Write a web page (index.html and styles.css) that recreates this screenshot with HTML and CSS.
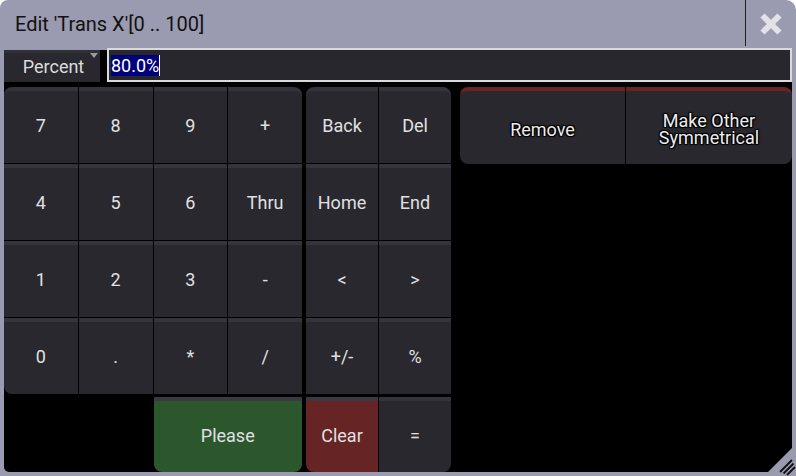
FILE: index.html
```html
<!DOCTYPE html>
<html>
<head>
<meta charset="utf-8">
<link rel="stylesheet" href="styles.css">
</head>
<body>
<div class="window">
  <div class="titlebar">
    <div class="title">Edit 'Trans X'[0 .. 100]</div>
    <div class="close">
      <svg width="24" height="24" viewBox="0 0 24 24"><path d="M3.5 3.5 L20.5 20.5 M20.5 3.5 L3.5 20.5" stroke="#e3e3e6" stroke-width="6" fill="none"/></svg>
    </div>
  </div>
  <div class="content">
    <div class="inputrow">
      <div class="unit">Percent<span class="tri"></span></div>
      <div class="field"><span class="sel">80.0%</span><span class="caret"></span></div>
    </div>
    <div class="pad">
      <div class="numpad">
        <div class="key tl">7</div>
        <div class="key">8</div>
        <div class="key">9</div>
        <div class="key tr">+</div>
        <div class="key">4</div>
        <div class="key">5</div>
        <div class="key">6</div>
        <div class="key">Thru</div>
        <div class="key">1</div>
        <div class="key">2</div>
        <div class="key">3</div>
        <div class="key">-</div>
        <div class="key bl">0</div>
        <div class="key">.</div>
        <div class="key">*</div>
        <div class="key">/</div>
        <div class="key please bl br">Please</div>
      </div>
      <div class="editpad">
        <div class="key tl">Back</div>
        <div class="key tr">Del</div>
        <div class="key">Home</div>
        <div class="key">End</div>
        <div class="key">&lt;</div>
        <div class="key">&gt;</div>
        <div class="key">+/-</div>
        <div class="key">%</div>
        <div class="key clear bl low">Clear</div>
        <div class="key br low">=</div>
      </div>
      <div class="actions">
        <div class="action tl bl">Remove</div>
        <div class="action tr br">Make Other<br>Symmetrical</div>
      </div>
    </div>
  </div>
  <svg class="grip" width="32" height="32" viewBox="0 0 32 32">
    <polygon points="0,32 32,0 32,32" fill="#9a9ab0"/>
    <path d="M16 28 L28 16 M19.5 29.5 L29.5 19.5 M23 31 L31 23" stroke="#111" stroke-width="1.8" fill="none"/>
  </svg>
</div>
</body>
</html>
```
FILE: styles.css
```css
* { box-sizing: border-box; }
body {
  margin: 0;
  background: #ffffff;
  font-family: Roboto, "Noto Sans", sans-serif;
}
.window {
  position: relative;
  width: 796px;
  height: 476px;
  background: #9a9ab0;
  border-radius: 8px 10px 0 0;
  overflow: hidden;
}
.titlebar {
  height: 46px;
  display: flex;
  align-items: center;
}
.title {
  flex: 1;
  padding-left: 15px;
  font-size: 20px;
  color: #111;
  padding-top: 1px;
}
.close {
  width: 51px;
  height: 46px;
  border-left: 1px solid #1e1e24;
  display: flex;
  align-items: center;
  justify-content: center;
  padding-top: 2px;
}
.content {
  margin: 4px 4px 0 4px;
  height: 422px;
  background: #000;
  border-bottom-left-radius: 5px;
  display: flex;
  flex-direction: column;
}
.inputrow {
  height: 32px;
  display: flex;
}
.unit {
  position: relative;
  width: 96px;
  height: 32px;
  background: #28282e;
  border-top: 3px solid #303037;
  color: #dcdcdc;
  font-size: 18px;
  display: flex;
  align-items: center;
  justify-content: center;
  padding-bottom: 2px;
  padding-left: 3px;
}
.tri {
  position: absolute;
  right: 2px;
  top: 0px;
  width: 0;
  height: 0;
  border-left: 4px solid transparent;
  border-right: 4px solid transparent;
  border-top: 5px solid #9a9a9e;
}
.field {
  flex: 1;
  margin-left: 7px;
  margin-top: -2px;
  height: 34px;
  border: 2px solid #dadade;
  background: #27272d;
  display: flex;
  align-items: center;
  padding-left: 2px;
  font-size: 18px;
}
.sel {
  background: #00007c;
  color: #ffffff;
  line-height: 21px;
}
.caret {
  width: 1px;
  height: 21px;
  background: #ffffff;
}
.pad {
  margin-top: 5px;
  flex: 1;
  display: flex;
  align-items: flex-start;
}
.numpad {
  width: 298px;
  display: grid;
  grid-template-columns: repeat(4, 1fr);
  grid-template-rows: 76px 76px 76px 76px 77px;
  gap: 1px;
}
.editpad {
  margin-left: 4px;
  width: 145px;
  display: grid;
  grid-template-columns: repeat(2, 1fr);
  grid-template-rows: 76px 76px 76px 76px 77px;
  gap: 1px;
}
.key {
  background: #28282e;
  border-top: 4px solid #34343c;
  color: #e0e0e2;
  font-size: 18px;
  display: flex;
  align-items: center;
  justify-content: center;
  padding-bottom: 3px;
}
.please {
  grid-column: 3 / 5;
  margin-top: 2px;
  background: #2c572d;
  border-top-color: #3a3a42;
}
.low { margin-top: 2px; }
.clear {
  background: #672424;
  border-top-color: #3a3a42;
}
.tl { border-top-left-radius: 8px; }
.tr { border-top-right-radius: 8px; }
.bl { border-bottom-left-radius: 8px; }
.br { border-bottom-right-radius: 8px; }
.actions {
  margin-left: 9px;
  flex: 1;
  height: 77px;
  display: grid;
  grid-template-columns: 165px 1fr;
  gap: 1px;
}
.action {
  background: #28282e;
  border-top: 4px solid #6a2222;
  color: #ececee;
  font-size: 18px;
  line-height: 17px;
  text-align: center;
  display: flex;
  align-items: center;
  justify-content: center;
  padding-top: 3px;
  text-shadow: -1px -1px 1px #000, 1px -1px 1px #000, -1px 1px 1px #000, 1px 1px 1px #000;
}
.grip {
  position: absolute;
  right: 0;
  bottom: 0;
}
```
